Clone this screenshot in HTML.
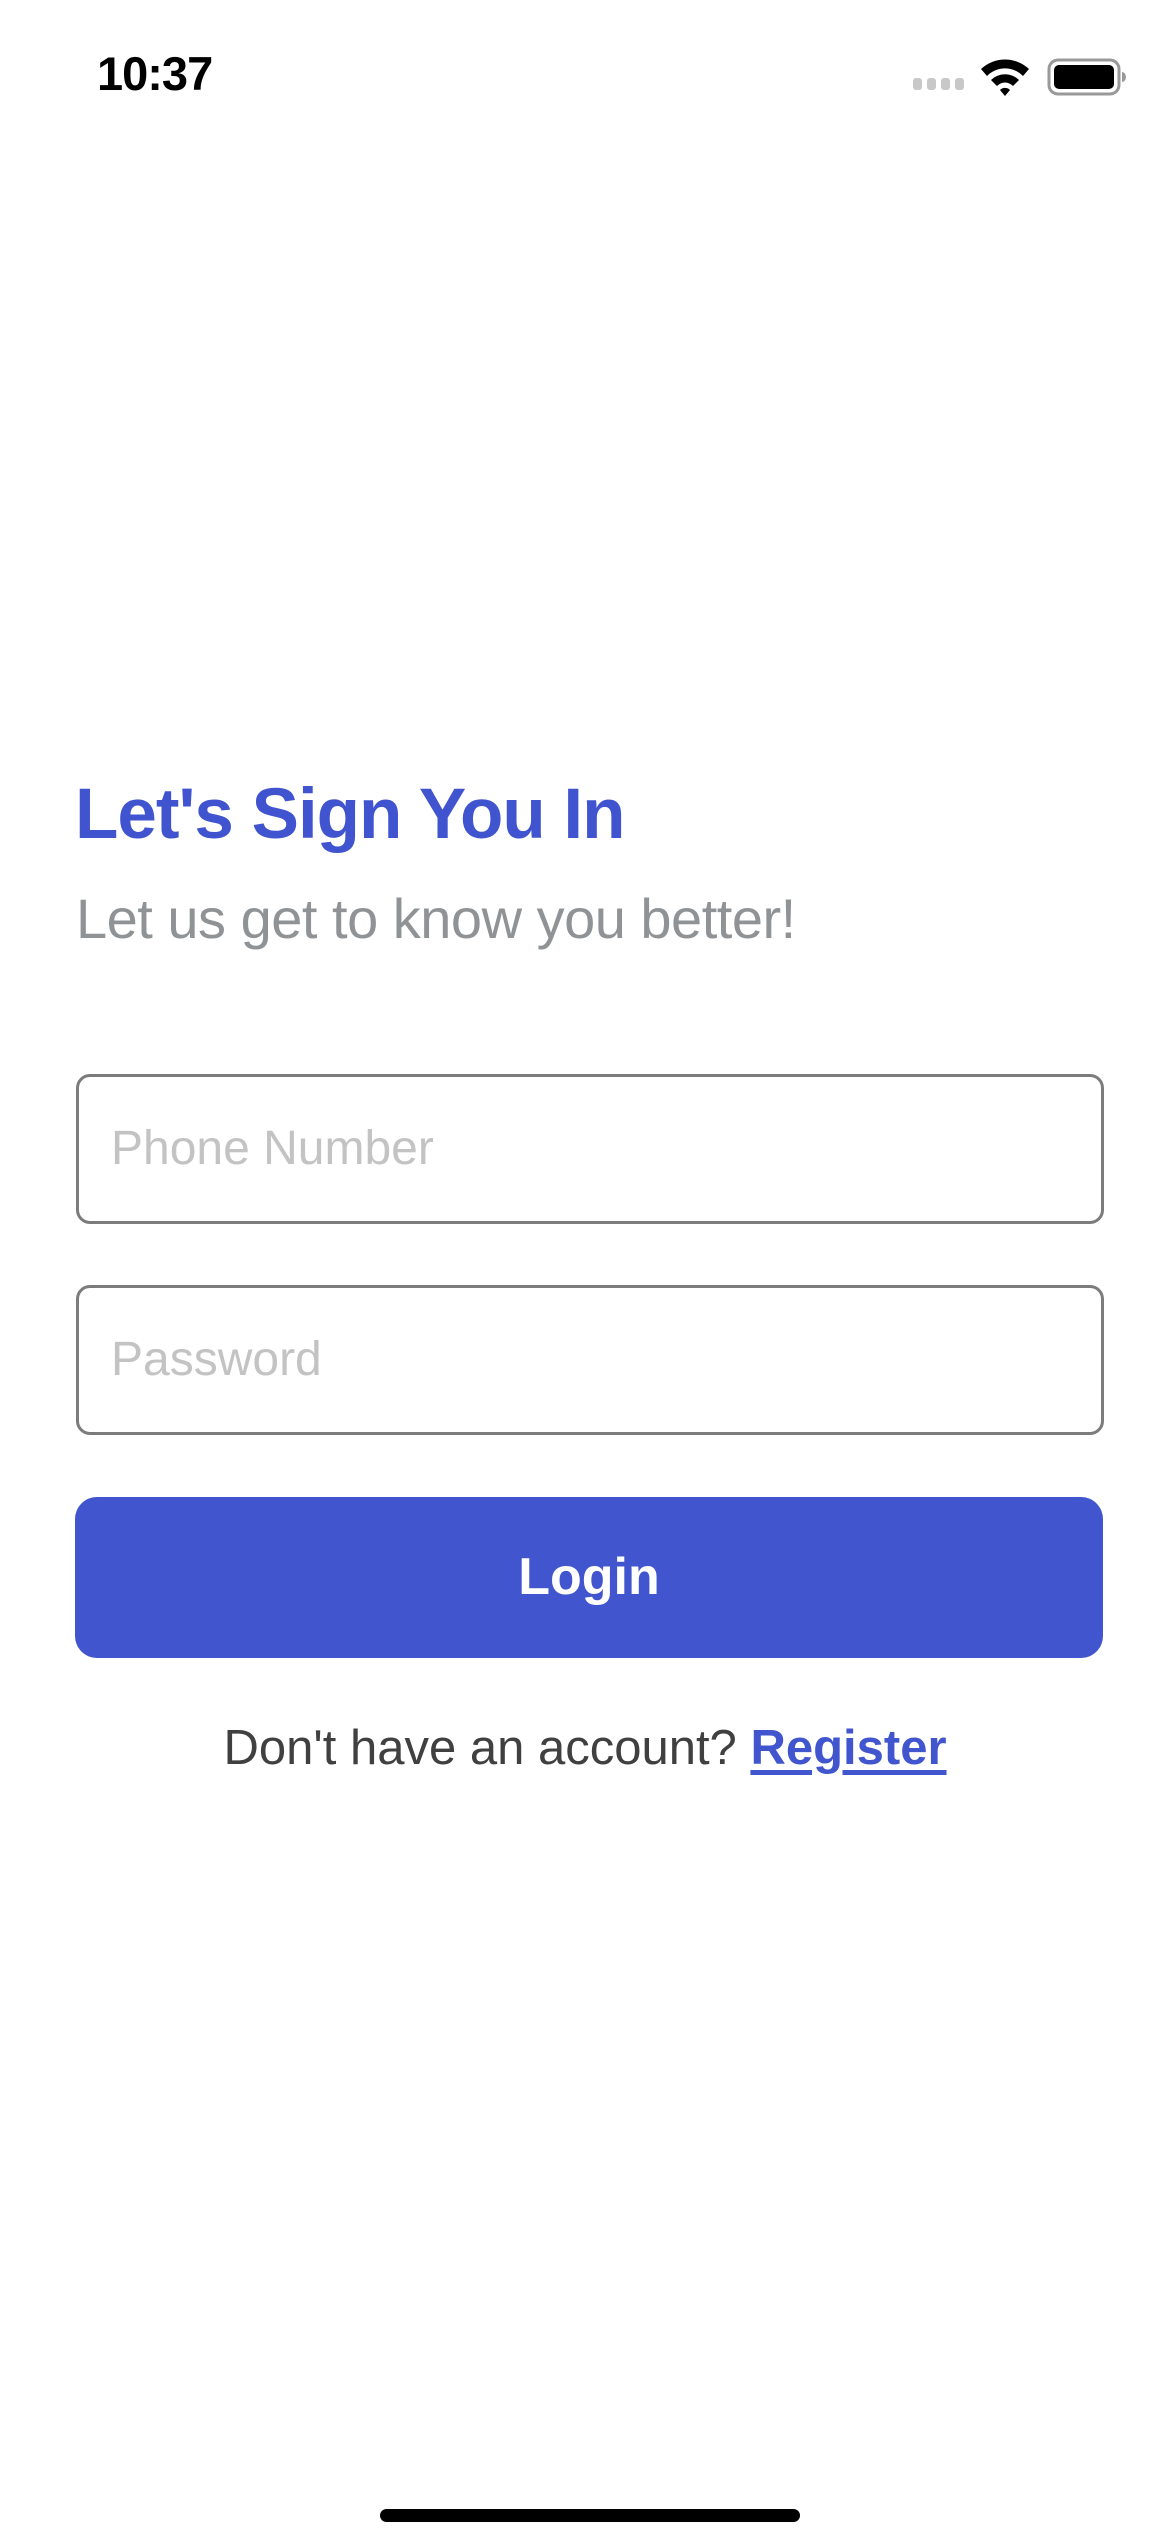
<!DOCTYPE html>
<html><head><meta charset="utf-8"><style>
html,body{margin:0;padding:0;background:#fff;width:1170px;height:2532px;overflow:hidden;font-family:"Liberation Sans",sans-serif;}
.abs{position:absolute;}
.time{left:97px;top:46px;font-size:47px;font-weight:bold;color:#000;letter-spacing:-1px;}
.title{left:75px;top:774px;font-size:71px;font-weight:bold;color:#4054cf;letter-spacing:-1px;white-space:nowrap;}
.sub{left:76px;top:886px;font-size:56px;color:#909396;white-space:nowrap;letter-spacing:-0.5px;}
.inp{left:76px;width:1022px;height:144px;border:3px solid #7c7c7c;border-radius:14px;}
.ph{position:absolute;left:32px;top:44px;font-size:48px;color:#c3c3c3;}
.btn{left:75px;top:1497px;width:1028px;height:161px;background:#4155cf;border-radius:22px;color:#fff;font-size:52px;font-weight:bold;text-align:center;line-height:161px;}
.foot{left:0;width:1170px;top:1720px;text-align:center;font-size:49px;color:#404040;white-space:nowrap;}
.foot a{color:#4155cf;font-weight:bold;text-decoration:underline;text-decoration-thickness:5px;text-underline-offset:6px;}
.home{left:380px;top:2509px;width:420px;height:13px;border-radius:7px;background:#000;}
</style></head><body>
<div class="abs time">10:37</div>
<svg class="abs" style="left:910px;top:55px" width="220" height="45" viewBox="0 0 220 45">
<rect x="3" y="23" width="9" height="12" rx="3" fill="#c8c8c8"/>
<rect x="17" y="23" width="9" height="12" rx="3" fill="#c8c8c8"/>
<rect x="31" y="23" width="9" height="12" rx="3" fill="#c8c8c8"/>
<rect x="45" y="23" width="9" height="12" rx="3" fill="#c8c8c8"/>
<path d="M71 14 A35 35 0 0 1 119 14 L113 21 A25 25 0 0 0 77 21 Z" fill="#000"/>
<path d="M81 25 A20 20 0 0 1 109 25 L103 31 A11 11 0 0 0 87 31 Z" fill="#000"/>
<path d="M90 35 A7 7 0 0 1 100 35 L95 41 Z" fill="#000"/>
<rect x="139" y="5" width="70" height="34" rx="9" fill="none" stroke="#999" stroke-width="3"/>
<rect x="144" y="10" width="60" height="24" rx="5" fill="#000"/>
<path d="M212 17 a4 5 0 0 1 0 10 z" fill="#999"/>
</svg>
<div class="abs title">Let's Sign You In</div>
<div class="abs sub">Let us get to know you better!</div>
<div class="abs inp" style="top:1074px"><div class="ph">Phone Number</div></div>
<div class="abs inp" style="top:1285px"><div class="ph">Password</div></div>
<div class="abs btn">Login</div>
<div class="abs foot">Don't have an account? <a>Register</a></div>
<div class="abs home"></div>
</body></html>
